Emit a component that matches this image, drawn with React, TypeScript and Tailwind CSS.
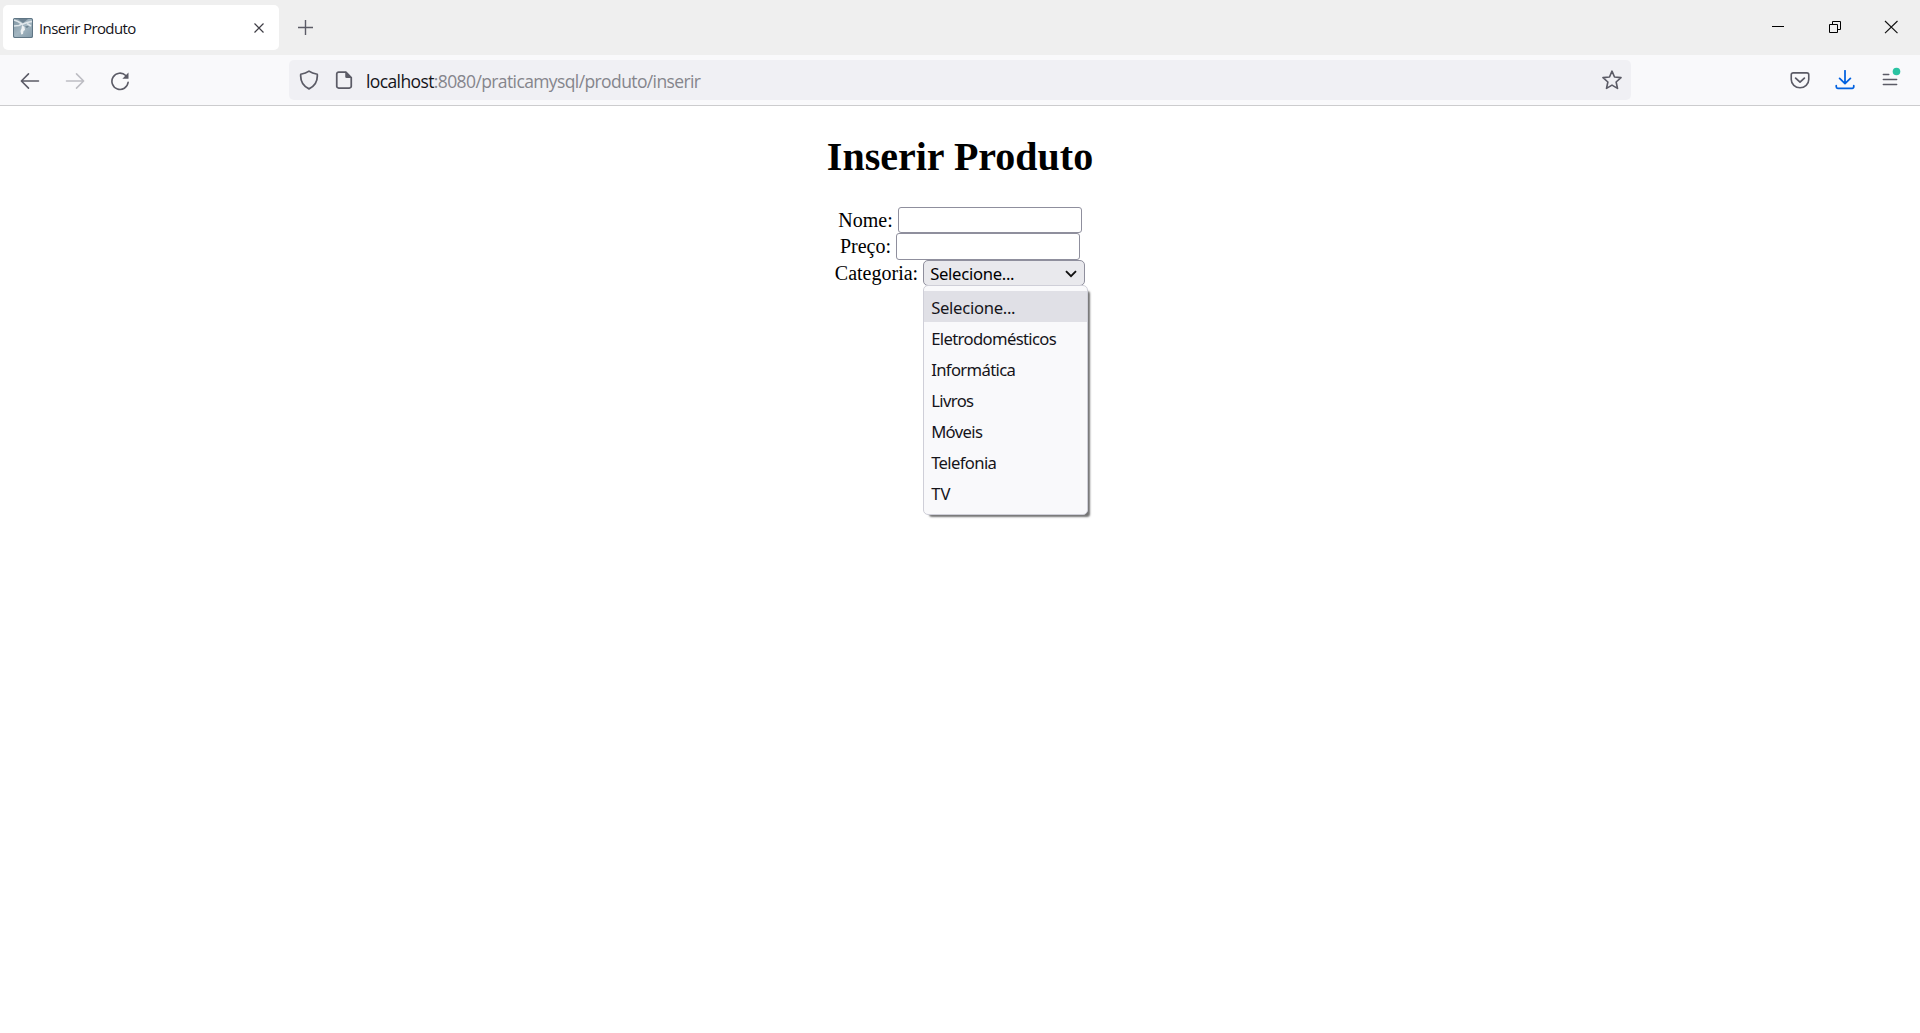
import React from "react";

const options = ["Selecione...", "Eletrodomésticos", "Informática", "Livros", "Móveis", "Telefonia", "TV"];

function Icon({ size = 20, className = "", children }: { size?: number; className?: string; children: React.ReactNode }) {
  return (
    <svg width={size} height={size} viewBox="0 0 16 16" fill="none" stroke="currentColor" strokeWidth="1.25" strokeLinecap="round" strokeLinejoin="round" className={`block shrink-0 ${className}`}>
      {children}
    </svg>
  );
}

function Favicon() {
  return (
    <svg width="20" height="20" viewBox="0 0 20 20" className="block shrink-0">
      <defs>
        <linearGradient id="fav" x1="0" y1="0" x2="1" y2="1">
          <stop offset="0" stopColor="#7d929f" />
          <stop offset="0.5" stopColor="#a3b6c1" />
          <stop offset="1" stopColor="#8199a8" />
        </linearGradient>
      </defs>
      <rect width="20" height="20" rx="1.5" fill="url(#fav)" />
      <rect x="0.5" y="0.5" width="19" height="19" rx="1.5" fill="none" stroke="#5f7584" />
      <path d="M5 1h10l-5 4z" fill="#6e8392" />
      <path d="M1 2l4 1.500 4 2.500M19 3.500l-5 1-5 2M1 8l5-0.500 3-1.500M18 8l-4-2.500" fill="none" stroke="#dfe6ea" strokeWidth="1.5" />
      <path d="M9 7l2.500 2 0.500 3-1.500 1-0.500 3-1.800 0.500-0.700-3.500 1-2.500z" fill="#eef2f4" />
      <path d="M12 8.500l4-0.500-2 2z" fill="#627886" />
    </svg>
  );
}

function TabStrip() {
  return (
    <div className="flex h-[55px] items-start bg-[#efefef] pl-[3px]">
      <div className="mt-[5px] flex h-[45px] w-[276px] items-center rounded-[5px] bg-white pl-2.5">
        <Favicon />
        <span className="ml-1.5 whitespace-nowrap font-['Open_Sans',sans-serif] text-[15px] leading-5 tracking-[-0.61px] text-[#15141a]">Inserir Produto</span>
        <svg width="10" height="10" viewBox="0 0 10 10" className="mr-[15px] ml-auto block" stroke="#3f3e46" strokeWidth="1.2">
          <path d="M0.500 0.500l9 9M9.500 0.500l-9 9" />
        </svg>
      </div>
      <svg width="15" height="15" viewBox="0 0 15 15" className="mt-5 ml-[19px] block" stroke="#5b5b66" strokeWidth="1.4">
        <path d="M7.500 0v15M0 7.500h15" />
      </svg>
      <div className="mt-[21px] mr-[22px] ml-auto flex gap-[45px]">
        <svg width="12" height="12" viewBox="0 0 12 12" className="block" stroke="#000">
          <path d="M0 5.500h12" />
        </svg>
        <svg width="12" height="12" viewBox="0 0 12 12" className="block" fill="none" stroke="#000">
          <path d="M0.500 3.500h8v8h-8zM3.500 3.500v-3h8v8h-3" />
        </svg>
        <svg width="13" height="12" viewBox="0 0 13 12" className="-ml-px block overflow-visible" stroke="#111" strokeWidth="1.15">
          <path d="M0 0l12.500 12.200M12.500 0L0 12.200" />
        </svg>
      </div>
    </div>
  );
}

function Toolbar() {
  return (
    <div className="flex h-[51px] items-center border-b border-[#ccccce] bg-[#f9f9fb] text-[#5b5b66]">
      <div className="flex w-[289px] gap-[25px] pt-px pl-5">
        <Icon><path d="M1.500 8h13.300M6.800 2.300L1.100 8l5.700 5.700" /></Icon>
        <Icon className="text-[#bdbdc3]"><path d="M1.200 8h13.300M9.200 2.300L14.900 8l-5.700 5.700" /></Icon>
        <Icon>
          <path d="M12.600 3.600A6.500 6.500 0 1 0 14.500 9" strokeWidth="1.3" />
          <path d="M14.800 1.200v4.900H9.900z" fill="currentColor" stroke="none" />
        </Icon>
      </div>
      <div className="flex h-10 w-[1342px] items-center rounded-[5px] bg-[#f0f0f4]">
        <Icon className="ml-2.5">
          <path d="M8 0.900c1.900 1.300 4 2 6.600 2.500 0.400 4.700-1.500 9.300-6.600 11.700C2.900 12.700 1 8.100 1.400 3.400 4 2.900 6.100 2.200 8 0.900z" strokeWidth="1.4" />
        </Icon>
        <Icon className="ml-[15px]">
          <path d="M9.500 1.600H3.700a1.500 1.500 0 0 0-1.500 1.500v9.800a1.500 1.500 0 0 0 1.500 1.500h8.600a1.500 1.500 0 0 0 1.500-1.500V6z" strokeWidth="1.4" />
          <path d="M9 1.200l5.200 5.200H10A1 1 0 0 1 9 5.400z" fill="currentColor" stroke="none" />
        </Icon>
        <div className="ml-3 pt-0.5 font-['Open_Sans',sans-serif] text-[17.5px] leading-6 tracking-[-0.61px] whitespace-nowrap text-[#85858c]">
          <span className="text-[#15141a]">localhost</span>:8080/praticamysql/produto/inserir
        </div>
        <Icon className="mr-[9px] ml-auto">
          <path d="M8 0.900l2 4.700 5.200 0.500-3.900 3.500 1.100 5.100L8 12.100l-4.400 2.600 1.100-5.100L0.800 6.100l5.200-0.500z" strokeWidth="1.3" />
        </Icon>
      </div>
      <div className="mr-5 ml-auto flex gap-[25px]">
        <Icon>
          <path d="M2.500 2.300h11a1.500 1.500 0 0 1 1.500 1.500v3.700a7 6.700 0 0 1-14 0V3.800a1.500 1.500 0 0 1 1.500-1.500z" strokeWidth="1.3" />
          <path d="M4.500 6.500L8 9.700l3.500-3.200" strokeWidth="1.4" />
        </Icon>
        <Icon className="text-[#0061e0]">
          <path d="M8 0.600v10M3.700 6.700L8 10.900l4.300-4.200" strokeWidth="1.4" />
          <path d="M1 12.500v0.900a1.200 1.200 0 0 0 1.200 1.200h11.600a1.200 1.200 0 0 0 1.200-1.200v-0.900" strokeWidth="1.4" />
        </Icon>
        <svg width="20" height="20" viewBox="0 0 20 20" className="block overflow-visible" stroke="currentColor" strokeWidth="1.4" strokeLinecap="round">
          <path d="M3.300 4.500h5.500M3.300 9.500h13.400M3.300 14.500h13.400" />
          <circle cx="16.500" cy="1.500" r="3.800" fill="#2ac3a2" stroke="none" />
        </svg>
      </div>
    </div>
  );
}

function CategorySelect() {
  return (
    <div className="relative ml-[5px] h-[26px] w-[162px] font-['Noto_Sans',sans-serif] text-[16.67px]">
      <div className="flex h-[26px] items-center rounded-[5px] border border-[#8f8f9d] bg-[#e9e9ed] pr-[7px] pl-1.5">
        <span className="pt-0.5 tracking-[-0.3px] text-black">Selecione...</span>
        <svg width="12" height="8" viewBox="0 0 12 8" className="mt-0.5 ml-auto block" fill="none" stroke="#111" strokeWidth="1.9">
          <path d="M1 1.200l5 5 5-5" />
        </svg>
      </div>
      <ul className="absolute top-[25px] left-0 h-[230px] w-[165px] rounded-[5px] border border-[#cfcfd8] bg-[#f9f9fb] pt-[5px] shadow-[4px_4px_2px_-2px_rgba(0,0,0,0.55)]">
        {options.map((option, index) => (
          <li key={option} className={`flex h-[31px] items-center pt-0.5 pl-[7px] text-[#15141a] ${index === 0 ? "bg-[#e0e0e6] tracking-[-0.3px]" : option === "TV" ? "tracking-normal" : "tracking-[-0.64px]"}`}>
            {option}
          </li>
        ))}
      </ul>
    </div>
  );
}

export default function App() {
  return (
    <div className="flex h-[1033px] w-full flex-col overflow-hidden bg-white">
      <TabStrip />
      <Toolbar />
      <main className="flex flex-col items-center font-['Liberation_Serif',serif] text-xl leading-6 text-black">
        <h1 className="mt-7 text-[40px] leading-[46px] font-bold">Inserir Produto</h1>
        <label className="mt-[27px] flex h-[26px] items-center">
          <span>Nome:</span>
          <input className="ml-[5px] h-[26px] w-[184px] rounded-[3px] border border-[#8f8f9d] bg-white" />
        </label>
        <label className="flex h-[27px] items-center">
          <span className="pb-px">Preço:</span>
          <input className="ml-[5px] h-[27px] w-[184px] rounded-[3px] border border-[#8f8f9d] bg-white" />
        </label>
        <div className="flex h-[26px] items-center">
          <span>Categoria:</span>
          <CategorySelect />
        </div>
      </main>
    </div>
  );
}
